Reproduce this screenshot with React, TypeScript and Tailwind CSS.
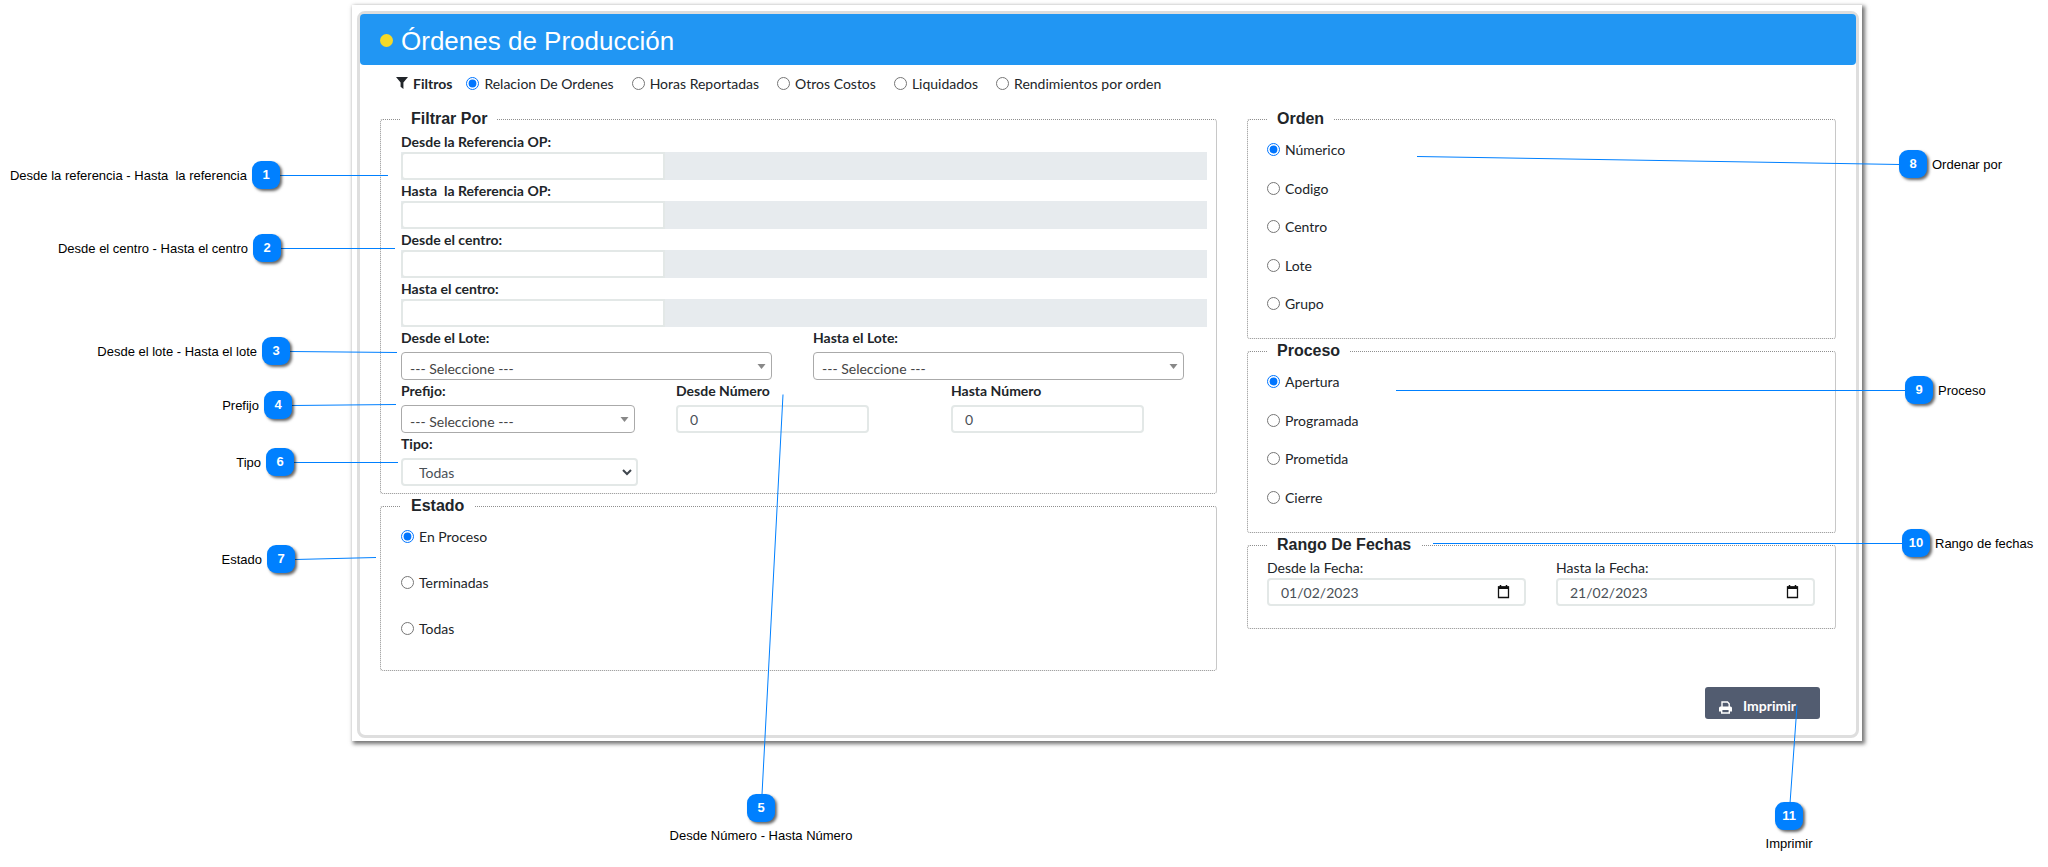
import { ReactNode } from "react";

const INPUT = "h-7 rounded border-2 border-[#e3e8e7] bg-white px-3 text-[14px] text-[#495057] outline-none";

function Radio({ name, label, checked }: { name: string; label: string; checked?: boolean }) {
  return (
    <label className="flex h-[21px] items-center gap-[5px] leading-[21px]">
      <input type="radio" name={name} defaultChecked={checked} className="m-0 size-[13px] accent-[#0075ff]" />
      {label}
    </label>
  );
}

function Group({ title, className, children }: { title: string; className: string; children: ReactNode }) {
  return (
    <fieldset className={"min-w-0 rounded-[3px] border border-dotted border-[#8f8f8f] border-r-[#c8c8c8] [border-right-style:solid] " + className}>
      <legend className="px-[10px] font-['Liberation_Sans',sans-serif] text-[16px] leading-6 font-bold">{title}</legend>
      {children}
    </fieldset>
  );
}

function Reference({ id, label }: { id: string; label: string }) {
  return (
    <div>
      <label htmlFor={id} className="block leading-[21px] font-bold whitespace-pre">{label}</label>
      <div className="flex bg-[#e7ebee]">
        <input id={id} type="text" className="h-7 w-[264px] rounded-l border-2 border-[#e3e8e7] bg-white px-3 outline-none" />
      </div>
    </div>
  );
}

function Picker({ id, label, width }: { id: string; label: string; width: string }) {
  return (
    <div>
      <label htmlFor={id} className="mb-1 block leading-[21px] font-bold">{label}</label>
      <div className={"relative " + width}>
        <select id={id} className="block h-7 w-full appearance-none rounded border border-[#aaa] bg-white pt-[5px] pr-6 pl-2 text-[14px] text-[#444] outline-none">
          <option>--- Seleccione ---</option>
        </select>
        <svg className="pointer-events-none absolute top-3 right-[6px]" width="9" height="5" viewBox="0 0 9 5">
          <path d="M0.5 0h8L4.500 5z" fill="#888" />
        </svg>
      </div>
    </div>
  );
}

function NumberField({ id, label }: { id: string; label: string }) {
  return (
    <div>
      <label htmlFor={id} className="mb-1 block leading-[21px] font-bold">{label}</label>
      <input id={id} type="text" inputMode="numeric" defaultValue="0" className={INPUT + " block w-[193px]"} />
    </div>
  );
}

function DateField({ id, label, value }: { id: string; label: string; value: string }) {
  return (
    <div>
      <label htmlFor={id} className="block leading-[21px]">{label}</label>
      <div className="relative">
        <input id={id} type="text" defaultValue={value} className={INPUT + " block w-full"} />
        <button type="button" aria-label={label} className="absolute top-[7px] right-4">
          <svg width="13" height="14" viewBox="0 0 13 14">
            <path d="M3.500 0v2M9.500 0v2" stroke="#111" strokeWidth="1.500" />
            <path d="M1.500 2h10v10.500h-10z" fill="none" stroke="#111" strokeWidth="1.300" />
            <path d="M1 1.500h11v2.500H1z" fill="#111" />
          </svg>
        </button>
      </div>
    </div>
  );
}

const CALLOUTS = [
  { n: 1, at: "top-[161px] right-[1768px]", text: "Desde la referencia - Hasta  la referencia", dir: "flex-row-reverse" },
  { n: 2, at: "top-[234px] right-[1767px]", text: "Desde el centro - Hasta el centro", dir: "flex-row-reverse" },
  { n: 3, at: "top-[337px] right-[1758px]", text: "Desde el lote - Hasta el lote", dir: "flex-row-reverse" },
  { n: 4, at: "top-[391px] right-[1756px]", text: "Prefijo", dir: "flex-row-reverse" },
  { n: 6, at: "top-[448px] right-[1754px]", text: "Tipo", dir: "flex-row-reverse" },
  { n: 7, at: "top-[545px] right-[1753px]", text: "Estado", dir: "flex-row-reverse" },
  { n: 8, at: "top-[150px] left-[1899px]", text: "Ordenar por", dir: "flex-row" },
  { n: 9, at: "top-[376px] left-[1905px]", text: "Proceso", dir: "flex-row" },
  { n: 10, at: "top-[529px] left-[1902px]", text: "Rango de fechas", dir: "flex-row" },
  { n: 5, at: "top-[794px] left-[661px] w-[200px]", text: "Desde Número - Hasta Número", dir: "flex-col" },
  { n: 11, at: "top-[802px] left-[1689px] w-[200px]", text: "Imprimir", dir: "flex-col" },
];

const LINES = [
  [280, 175, 388, 175],
  [281, 248, 395, 248],
  [290, 351, 397, 352],
  [292, 405, 396, 404],
  [294, 462, 398, 462],
  [295, 559, 376, 557],
  [783, 394, 762, 794],
  [1417, 156, 1900, 164],
  [1396, 390, 1906, 390],
  [1433, 543, 1904, 543],
  [1797, 705, 1790, 803],
];

export default function App() {
  return (
    <div className="relative min-h-[867px] bg-white pt-[5px] pr-[186px] pl-[352px] font-[Lato,sans-serif] text-[14px] text-[#212529]">
      <main className="bg-white pt-[6px] pr-[3px] pb-[3px] pl-[5px] shadow-[2px_2px_4px_1px_rgba(0,0,0,0.55)]">
        <form className="rounded-lg border-[3px] border-[#dedede]" onSubmit={(e) => e.preventDefault()}>
          <header className="flex h-[51px] items-center gap-2 rounded bg-[#2196f3] pt-[2px] pl-5 text-white">
            <span className="size-[13px] rounded-full bg-[#f5d928]" />
            <h1 className="font-['Liberation_Sans',sans-serif] text-[26px] leading-8">Órdenes de Producción</h1>
          </header>

          <div className="flex h-[42px] items-center gap-[18px] pr-5 pb-[6px] pl-9">
            <span className="-mr-1 flex items-center gap-[5px] font-bold">
              <svg width="12" height="12" viewBox="0 0 11 11">
                <path d="M0 0h11L6.800 5v6L4.200 9V5z" fill="#212529" />
              </svg>
              Filtros
            </span>
            <Radio name="informe" label="Relacion De Ordenes" checked />
            <Radio name="informe" label="Horas Reportadas" />
            <Radio name="informe" label="Otros Costos" />
            <Radio name="informe" label="Liquidados" />
            <Radio name="informe" label="Rendimientos por orden" />
          </div>

          <div className="grid grid-cols-[837fr_589fr] items-start gap-x-[30px] px-5">
            <div>
              <Group title="Filtrar Por" className="pr-[9px] pb-[7px] pl-5">
                <Reference id="ref-desde" label="Desde la Referencia OP:" />
                <Reference id="ref-hasta" label="Hasta  la Referencia OP:" />
                <Reference id="centro-desde" label="Desde el centro:" />
                <Reference id="centro-hasta" label="Hasta el centro:" />
                <div className="grid grid-cols-[412fr_394fr]">
                  <Picker id="lote-desde" label="Desde el Lote:" width="w-[371px]" />
                  <Picker id="lote-hasta" label="Hasta el Lote:" width="w-[371px]" />
                </div>
                <div className="grid grid-cols-[275fr_275fr_256fr]">
                  <Picker id="prefijo" label="Prefijo:" width="w-[234px]" />
                  <NumberField id="numero-desde" label="Desde Número" />
                  <NumberField id="numero-hasta" label="Hasta Número" />
                </div>
                <label htmlFor="tipo" className="mb-1 block leading-[21px] font-bold">Tipo:</label>
                <div className="relative w-[237px]">
                  <select id="tipo" className="block h-7 w-full appearance-none rounded border-2 border-[#e3e8e7] bg-white px-4 text-[14px] text-[#495057] outline-none">
                    <option>Todas</option>
                  </select>
                  <svg className="pointer-events-none absolute top-[11px] right-[6px]" width="10" height="7" viewBox="0 0 10 7">
                    <path d="M1 1l4 4 4-4" fill="none" stroke="#3f464d" strokeWidth="2" />
                  </svg>
                </div>
              </Group>
              <Group title="Estado" className="pr-[9px] pb-[31px] pl-5">
                <div className="flex flex-col gap-[25px] pt-2">
                  <Radio name="estado" label="En Proceso" checked />
                  <Radio name="estado" label="Terminadas" />
                  <Radio name="estado" label="Todas" />
                </div>
              </Group>
            </div>

            <div>
              <Group title="Orden" className="pb-6 pl-[19px]">
                <div className="mt-2 flex h-[175px] flex-col justify-between">
                  <Radio name="orden" label="Númerico" checked />
                  <Radio name="orden" label="Codigo" />
                  <Radio name="orden" label="Centro" />
                  <Radio name="orden" label="Lote" />
                  <Radio name="orden" label="Grupo" />
                </div>
              </Group>
              <Group title="Proceso" className="pb-6 pl-[19px]">
                <div className="mt-2 flex h-[137px] flex-col justify-between">
                  <Radio name="proceso" label="Apertura" checked />
                  <Radio name="proceso" label="Programada" />
                  <Radio name="proceso" label="Prometida" />
                  <Radio name="proceso" label="Cierre" />
                </div>
              </Group>
              <Group title="Rango De Fechas" className="pr-5 pb-[22px] pl-[19px]">
                <div className="grid grid-cols-2 gap-[30px]">
                  <DateField id="fecha-desde" label="Desde la Fecha:" value="01/02/2023" />
                  <DateField id="fecha-hasta" label="Hasta la Fecha:" value="21/02/2023" />
                </div>
              </Group>
            </div>
          </div>

          <div className="flex justify-end pt-4 pr-9 pb-4">
            <button type="submit" className="flex h-8 w-[115px] items-center gap-[11px] rounded-[3px] bg-[#525c70] pt-1 pl-[14px] text-[14px] font-bold text-white">
              <svg width="13" height="13" viewBox="0 0 13 13" className="mt-1">
                <path d="M3 6V1h5.500L10.200 2.700V6" fill="none" stroke="#fff" strokeWidth="1.400" />
                <path d="M1.500 5.500h10Q13 5.500 13 7v3.500h-2V9H2v1.500H0V7Q0 5.500 1.500 5.500z" fill="#fff" />
                <path d="M2.700 8.500v3.500h7.600V8.500" fill="none" stroke="#fff" strokeWidth="1.400" />
              </svg>
              Imprimir
            </button>
          </div>
        </form>
      </main>

      <svg className="pointer-events-none absolute top-0 left-0" width="2048" height="867" viewBox="0 0 2048 867">
        {LINES.map(([x1, y1, x2, y2]) => (
          <line key={x1} x1={x1} y1={y1 + 0.5} x2={x2} y2={y2 + 0.5} stroke="#0080ff" strokeWidth="1" />
        ))}
      </svg>
      {CALLOUTS.map((c) => (
        <div key={c.n} className={"absolute flex items-center gap-[5px] font-['Liberation_Sans',sans-serif] text-[13px] leading-4 whitespace-pre text-black " + c.dir + " " + c.at}>
          <span className="flex size-7 items-center justify-center rounded-[9px] bg-[#0080ff] font-bold text-white shadow-[2px_2px_3px_rgba(0,0,0,0.6)]">{c.n}</span>
          <span className="pt-px">{c.text}</span>
        </div>
      ))}
    </div>
  );
}
